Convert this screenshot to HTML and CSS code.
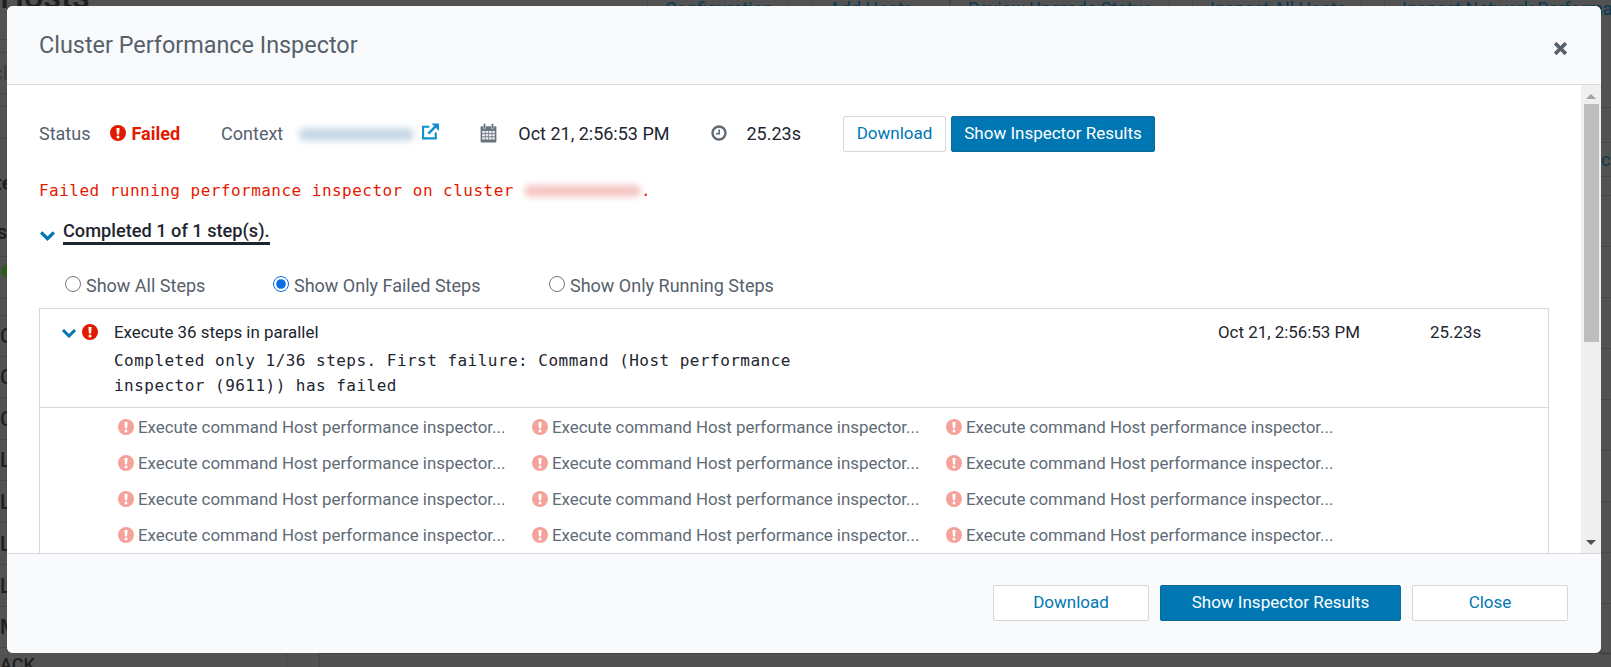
FILE: index.html
```html
<!DOCTYPE html>
<html lang="en">
<head>
    <meta charset="UTF-8">
    <title>Cluster Performance Inspector</title>
    <link rel="stylesheet" href="styles.css">
</head>
<body>
    <!-- page behind the dialog, only the edges show -->
    <div class="page">
        <div class="side-left">
            <div class="row r40"><span class="hosts">Hosts</span></div>
            <div class="row r13"></div>
            <div class="row r41 grey">rch</div>
            <div class="row r13"></div>
            <div class="row r32"></div>
            <div class="row r118">
                <b class="bold-top">te</b>
                <b class="bold-bottom">s</b>
            </div>
            <div class="row r42"><span class="ok"></span></div>
            <div class="row r17"></div>
            <div class="row r41">C</div>
            <div class="row r41">C</div>
            <div class="row r42">C</div>
            <div class="row r41">L</div>
            <div class="row r42">L</div>
            <div class="row r42">L</div>
            <div class="row r42">L</div>
            <div class="row r41">M</div>
            <div class="row last">ACK</div>
        </div>
        <div class="tabs">
            <div class="tab t1">Configuration</div>
            <div class="tab t2">Add Hosts</div>
            <div class="tab t3">Review Upgrade Status</div>
            <div class="tab t4">Inspect All Hosts</div>
            <div class="tab t5">Inspect Network Performance</div>
        </div>
        <div class="side-right">
            <div class="rline h35"></div>
            <div class="rline h34"><span class="ct">ct</span></div>
            <div class="rline h19"></div>
            <div class="rline h51"></div>
            <div class="rline h51"></div>
            <div class="rline h51"></div>
            <div class="rline h51"></div>
            <div class="rline h51"></div>
            <div class="rline h51"></div>
            <div class="rline h51"></div>
            <div class="rline h51"></div>
            <div class="rline h51"></div>
        </div>
        <div class="bottom-edge"></div>
    </div>

    <div class="modal">
        <div class="modal-header">
            <h4>Cluster Performance Inspector</h4>
            <svg class="close-x" viewBox="0 0 14 14"><path d="M3.200 0.800 7 4.600 10.800 0.800 13.200 3.200 9.400 7 13.200 10.800 10.800 13.200 7 9.400 3.200 13.200 0.800 10.800 4.600 7 0.800 3.200Z"/></svg>
        </div>
        <div class="modal-body">
            <div class="content">
                <div class="summary">
                    <span class="label">Status</span>
                    <span class="failed">
                        <svg class="alert" viewBox="0 0 16 16"><circle cx="8" cy="8" r="8" fill="#e31a00"/><path d="M6.400 3H9.600L9.100 9.400H6.900Z" fill="#fff"/><circle cx="8" cy="12" r="1.500" fill="#fff"/></svg>
                        Failed
                    </span>
                    <span class="label context-label">Context</span>
                    <span class="smudge smudge-blue"></span>
                    <svg class="ext" viewBox="0 0 18 18"><path d="M14 10v5.500H2V4.500h6" fill="none" stroke="#0f8fd0" stroke-width="2"/><path d="M7 11 14 4" stroke="#0f8fd0" stroke-width="2.400"/><path d="M10 1.500H17V8.500Z" fill="#0f8fd0"/></svg>
                    <svg class="cal" viewBox="0 0 16 19"><rect x="0.500" y="3" width="15" height="15.500" rx="1" fill="#66727d"/><g fill="#e8ebee"><rect x="2" y="7.500" width="2.600" height="2.200"/><rect x="5.200" y="7.500" width="2.600" height="2.200"/><rect x="8.400" y="7.500" width="2.600" height="2.200"/><rect x="11.600" y="7.500" width="2.400" height="2.200"/><rect x="2" y="10.500" width="2.600" height="2.200"/><rect x="5.200" y="10.500" width="2.600" height="2.200"/><rect x="8.400" y="10.500" width="2.600" height="2.200"/><rect x="11.600" y="10.500" width="2.400" height="2.200"/><rect x="2" y="13.500" width="2.600" height="2.200"/><rect x="5.200" y="13.500" width="2.600" height="2.200"/><rect x="8.400" y="13.500" width="2.600" height="2.200"/><rect x="11.600" y="13.500" width="2.400" height="2.200"/></g><rect x="3" y="0.500" width="2.400" height="5" rx="1.200" fill="#66727d" stroke="#fff" stroke-width="0.500"/><rect x="10.600" y="0.500" width="2.400" height="5" rx="1.200" fill="#66727d" stroke="#fff" stroke-width="0.500"/></svg>
                    <span class="value date">Oct 21, 2:56:53 PM</span>
                    <svg class="clock" viewBox="0 0 16 16"><circle cx="8" cy="8" r="6.500" fill="none" stroke="#5f6b76" stroke-width="2.400"/><path d="M8.200 4.500V8.800H5" fill="none" stroke="#5f6b76" stroke-width="1.600"/></svg>
                    <span class="value time">25.23s</span>
                    <button class="btn top-btn download">Download</button>
                    <button class="btn top-btn primary">Show Inspector Results</button>
                </div>

                <div class="fail-msg">Failed running performance inspector on cluster <span class="smudge smudge-red"></span>.</div>

                <div class="completed">
                    <svg class="chev" viewBox="0 0 16 10"><path d="M2 2 8 8 14 2" fill="none" stroke="#0077b3" stroke-width="3"/></svg>
                    <span class="completed-text">Completed 1 of 1 step(s).</span>
                </div>

                <div class="filters">
                    <label class="filter f-all"><input type="radio" name="steps">Show All Steps</label>
                    <label class="filter f-failed"><input type="radio" name="steps" checked>Show Only Failed Steps</label>
                    <label class="filter"><input type="radio" name="steps">Show Only Running Steps</label>
                </div>

                <div class="steps">
                    <div class="step-head">
                        <svg class="chev small" viewBox="0 0 16 10"><path d="M2 2 8 8 14 2" fill="none" stroke="#0077b3" stroke-width="3"/></svg>
                        <svg class="alert" viewBox="0 0 16 16"><circle cx="8" cy="8" r="8" fill="#e31a00"/><path d="M6.400 3H9.600L9.100 9.400H6.900Z" fill="#fff"/><circle cx="8" cy="12" r="1.500" fill="#fff"/></svg>
                        <div class="step-main">
                            <div class="step-title">Execute 36 steps in parallel</div>
                            <div class="step-msg">Completed only 1/36 steps. First failure: Command (Host performance inspector (9611)) has failed</div>
                        </div>
                        <div class="step-date">Oct 21, 2:56:53 PM</div>
                        <div class="step-time">25.23s</div>
                    </div>
                    <div class="step-grid" id="grid"></div>
                </div>
            </div>
            <div class="scrollbar">
                <span class="arrow up"></span>
                <span class="thumb"></span>
                <span class="arrow down"></span>
            </div>
        </div>
        <div class="modal-footer">
            <button class="btn foot-btn download">Download</button>
            <button class="btn foot-btn primary wide">Show Inspector Results</button>
            <button class="btn foot-btn download">Close</button>
        </div>
    </div>
    <script>
        let grid=document.getElementById("grid")
        for(let i=0;i<12;i++){
            grid.innerHTML+='<div class="sub"><svg class="alert" viewBox="0 0 16 16"><circle cx="8" cy="8" r="8" fill="#f4a29a"/><path d="M6.400 3H9.600L9.100 9.400H6.900Z" fill="#fff"/><circle cx="8" cy="12" r="1.500" fill="#fff"/></svg>Execute command Host performance inspector...</div>'
        }
    </script>
</body>
</html>
```

FILE: styles.css
```css
*{
    box-sizing: border-box;
}
html,body{
    margin: 0;
    height: 100%;
    overflow: hidden;
}
body{
    position: relative;
    font-family: Roboto, "Liberation Sans", sans-serif;
    font-size: 16.900px;
    background: #525252;
}

/* page behind the dialog */
.page{
    height: 667px;
    display: flex;
    overflow: hidden;
    color: #1f1f1f;
}
.side-left{
    width: 640px;
    flex: none;
    font-size: 20px;
}
.row{
    display: flex;
    flex-direction: column;
    justify-content: center;
    border-bottom: 1px solid #474747;
    font-weight: 500;
    line-height: 20px;
}
.r13{height: 13px;}
.r17{height: 17px;}
.r32{height: 32px;}
.r40{height: 40px;}
.r41{height: 41px;}
.r42{height: 42px;}
.r118{
    height: 118px;
    padding-top: 20px;
    justify-content: space-around;
}
.last{
    margin-top: 7px;
    font-size: 18px;
    border-bottom: 0;
}
.grey{
    color: #3a3a3a;
    font-weight: 400;
    margin-left: -14px;
}
.hosts{
    margin-top: -48px;
    font-size: 34px;
    line-height: 40px;
}
.bold-top{
    margin-left: -5px;
}
.bold-bottom{
    margin-left: -3px;
}
.ok{
    width: 14px;
    height: 14px;
    margin-left: 1px;
    margin-top: -14px;
    border-radius: 50%;
    background: #2f5a1c;
}
.tabs{
    flex: 1;
    min-width: 0;
    display: flex;
    gap: 22px;
    height: 30px;
    padding-left: 7px;
    white-space: nowrap;
    color: #0b3a50;
    font-size: 18px;
    line-height: 17px;
}
.tab{
    flex: none;
    height: 30px;
    padding-left: 17px;
    border-left: 1px solid #474747;
    border-right: 1px solid #474747;
}
.t1{width: 142px;}
.t2{width: 139px;}
.t3{
    width: 220px;
    margin-left: -22px;
}
.t4{width: 170px;}
.t5{width: 260px;}
.side-right{
    position: absolute;
    left: 1601px;
    top: 107px;
    width: 10px;
    overflow: hidden;
    border-top: 1px solid #474747;
}
.rline{
    border-bottom: 1px solid #474747;
    color: #0b3a50;
    font-size: 18px;
}
.h19{height: 19px;}
.h34{height: 34px;}
.h35{height: 35px;}
.h51{height: 51px;}
.ct{
    display: block;
    width: 10px;
    line-height: 34px;
    white-space: nowrap;
}
.bottom-edge{
    position: absolute;
    left: 286px;
    right: 0;
    top: 652px;
    height: 15px;
    border-left: 1px solid #474747;
}
.bottom-edge::after{
    content: "";
    display: block;
    height: 100%;
    margin-left: 32px;
    border-top: 2px solid #464646;
    border-left: 1px solid #474747;
}

/* dialog */
.modal{
    position: absolute;
    left: 7px;
    top: 6px;
    width: 1594px;
    height: 647px;
    display: flex;
    flex-direction: column;
    background: #fff;
    border-radius: 6px;
    overflow: hidden;
}
.modal-header{
    height: 79px;
    flex: none;
    display: flex;
    justify-content: space-between;
    align-items: center;
    padding: 0 33px 0 32px;
    background: #f9fafc;
    border-bottom: 1px solid #d6d8dc;
}
h4{
    margin: 0;
    font-size: 23.400px;
    font-weight: 400;
    color: #56616c;
}
.close-x{
    width: 15px;
    height: 15px;
    margin-top: 6px;
    fill: #56616c;
}
.modal-body{
    flex: 1;
    min-height: 0;
    display: flex;
}
.content{
    flex: 1;
    min-width: 0;
    overflow: hidden;
    padding: 31px 0 0 32px;
}
.summary{
    display: flex;
    align-items: center;
    height: 36px;
}
.label{
    color: #56616c;
    font-size: 18px;
    margin-top: -2px;
}
.value{
    color: #1d2530;
    font-size: 18px;
    margin-top: -2px;
}
.failed{
    display: flex;
    align-items: center;
    gap: 5px;
    margin: -2px 0 0 20px;
    color: #e31a00;
    font-weight: 700;
    font-size: 18px;
}
.alert{
    width: 16px;
    height: 16px;
    flex: none;
}
.context-label{
    margin-left: 41px;
}
.smudge{
    display: inline-block;
    border-radius: 6px;
    filter: blur(3px);
}
.smudge-blue{
    width: 115px;
    height: 13px;
    margin-left: 16px;
    background: #c9d8e6;
}
.ext{
    width: 19px;
    height: 19px;
    margin: -6px 0 0 7px;
}
.cal{
    width: 17px;
    height: 20px;
    margin: -2px 0 0 40px;
}
.date{
    margin-left: 21px;
}
.clock{
    width: 16px;
    height: 16px;
    margin: -2px 0 0 41px;
}
.time{
    margin-left: 20px;
}
.btn{
    height: 36px;
    border: 1px solid #d4d7dc;
    border-radius: 2px;
    background: #fff;
    color: #0077b3;
    font-family: inherit;
    font-size: 17px;
    padding: 0 0 2px;
}
.btn.primary{
    background: #0077b3;
    border-color: #0a6a9c;
    color: #fff;
}
.top-btn.download{
    width: 103px;
    margin-left: 42px;
}
.top-btn.primary{
    width: 204px;
    margin-left: 5px;
}
.fail-msg{
    margin-top: 29px;
    color: #e31a00;
    font-family: "DejaVu Sans Mono", "Liberation Mono", monospace;
    font-size: 16px;
    letter-spacing: 0.47px;
    line-height: 20px;
}
.smudge-red{
    width: 117px;
    height: 12px;
    background: #f4c6c3;
    vertical-align: -1px;
}
.completed{
    margin-top: 20px;
    display: flex;
    align-items: flex-start;
    gap: 7px;
}
.chev{
    width: 17px;
    height: 11px;
    margin-top: 9px;
}
.completed-text{
    font-weight: 500;
    color: #1d2530;
    font-size: 18.200px;
    line-height: 20px;
    padding-bottom: 1px;
    border-bottom: 3px solid #1d2530;
}
.filters{
    display: flex;
    margin-top: 27px;
    padding-left: 26px;
    height: 26px;
    align-items: center;
}
.filter{
    display: flex;
    align-items: center;
    gap: 5px;
    color: #56616c;
    font-size: 18px;
}
.filter input{
    width: 16px;
    height: 16px;
    margin: 0 0 2px;
    accent-color: #0a6ee0;
}
.f-all{
    width: 208px;
}
.f-failed{
    width: 276px;
}
.steps{
    margin: 10px 0 0;
    width: 1510px;
    height: 400px;
    border: 1px solid #d6d8dc;
}
.step-head{
    display: flex;
    align-items: flex-start;
    padding: 12px 0 0 21px;
    height: 99px;
    border-bottom: 1px solid #d6d8dc;
}
.chev.small{
    width: 16px;
    height: 10px;
    margin: 7px 0 0;
}
.step-head .alert{
    margin: 3px 0 0 5px;
}
.step-main{
    width: 1104px;
    margin-left: 16px;
}
.step-title{
    line-height: 22px;
    color: #1d2530;
}
.step-msg{
    width: 720px;
    margin-top: 5px;
    font-family: "DejaVu Sans Mono", "Liberation Mono", monospace;
    font-size: 16px;
    letter-spacing: 0.47px;
    line-height: 25px;
    color: #1d2530;
}
.step-date{
    width: 212px;
    line-height: 22px;
    color: #1d2530;
}
.step-time{
    line-height: 22px;
    color: #1d2530;
}
.step-grid{
    display: grid;
    grid-template-columns: repeat(3, 414px);
    grid-auto-rows: 36px;
    padding: 1px 0 0 78px;
}
.sub{
    display: flex;
    align-items: center;
    gap: 4px;
    height: 36px;
    white-space: nowrap;
    color: #5f6b76;
}
.scrollbar{
    width: 20px;
    flex: none;
    display: flex;
    flex-direction: column;
    align-items: center;
    background: #efefef;
}
.thumb{
    width: 15px;
    height: 238px;
    background: #bdbdbd;
}
.arrow{
    width: 0;
    height: 0;
    border-left: 5px solid transparent;
    border-right: 5px solid transparent;
}
.arrow.up{
    margin: 9px 0 5px;
    border-bottom: 5px solid #a3a3a3;
}
.arrow.down{
    margin-top: auto;
    margin-bottom: 8px;
    border-top: 5px solid #4f4f4f;
}
.modal-footer{
    height: 100px;
    flex: none;
    display: flex;
    align-items: flex-start;
    justify-content: flex-end;
    gap: 11px;
    padding: 31px 33px 0 0;
    background: #f9fafc;
    border-top: 1px solid #d6d8dc;
}
.foot-btn{
    width: 156px;
    flex: none;
}
.foot-btn.wide{
    width: 241px;
}
```
